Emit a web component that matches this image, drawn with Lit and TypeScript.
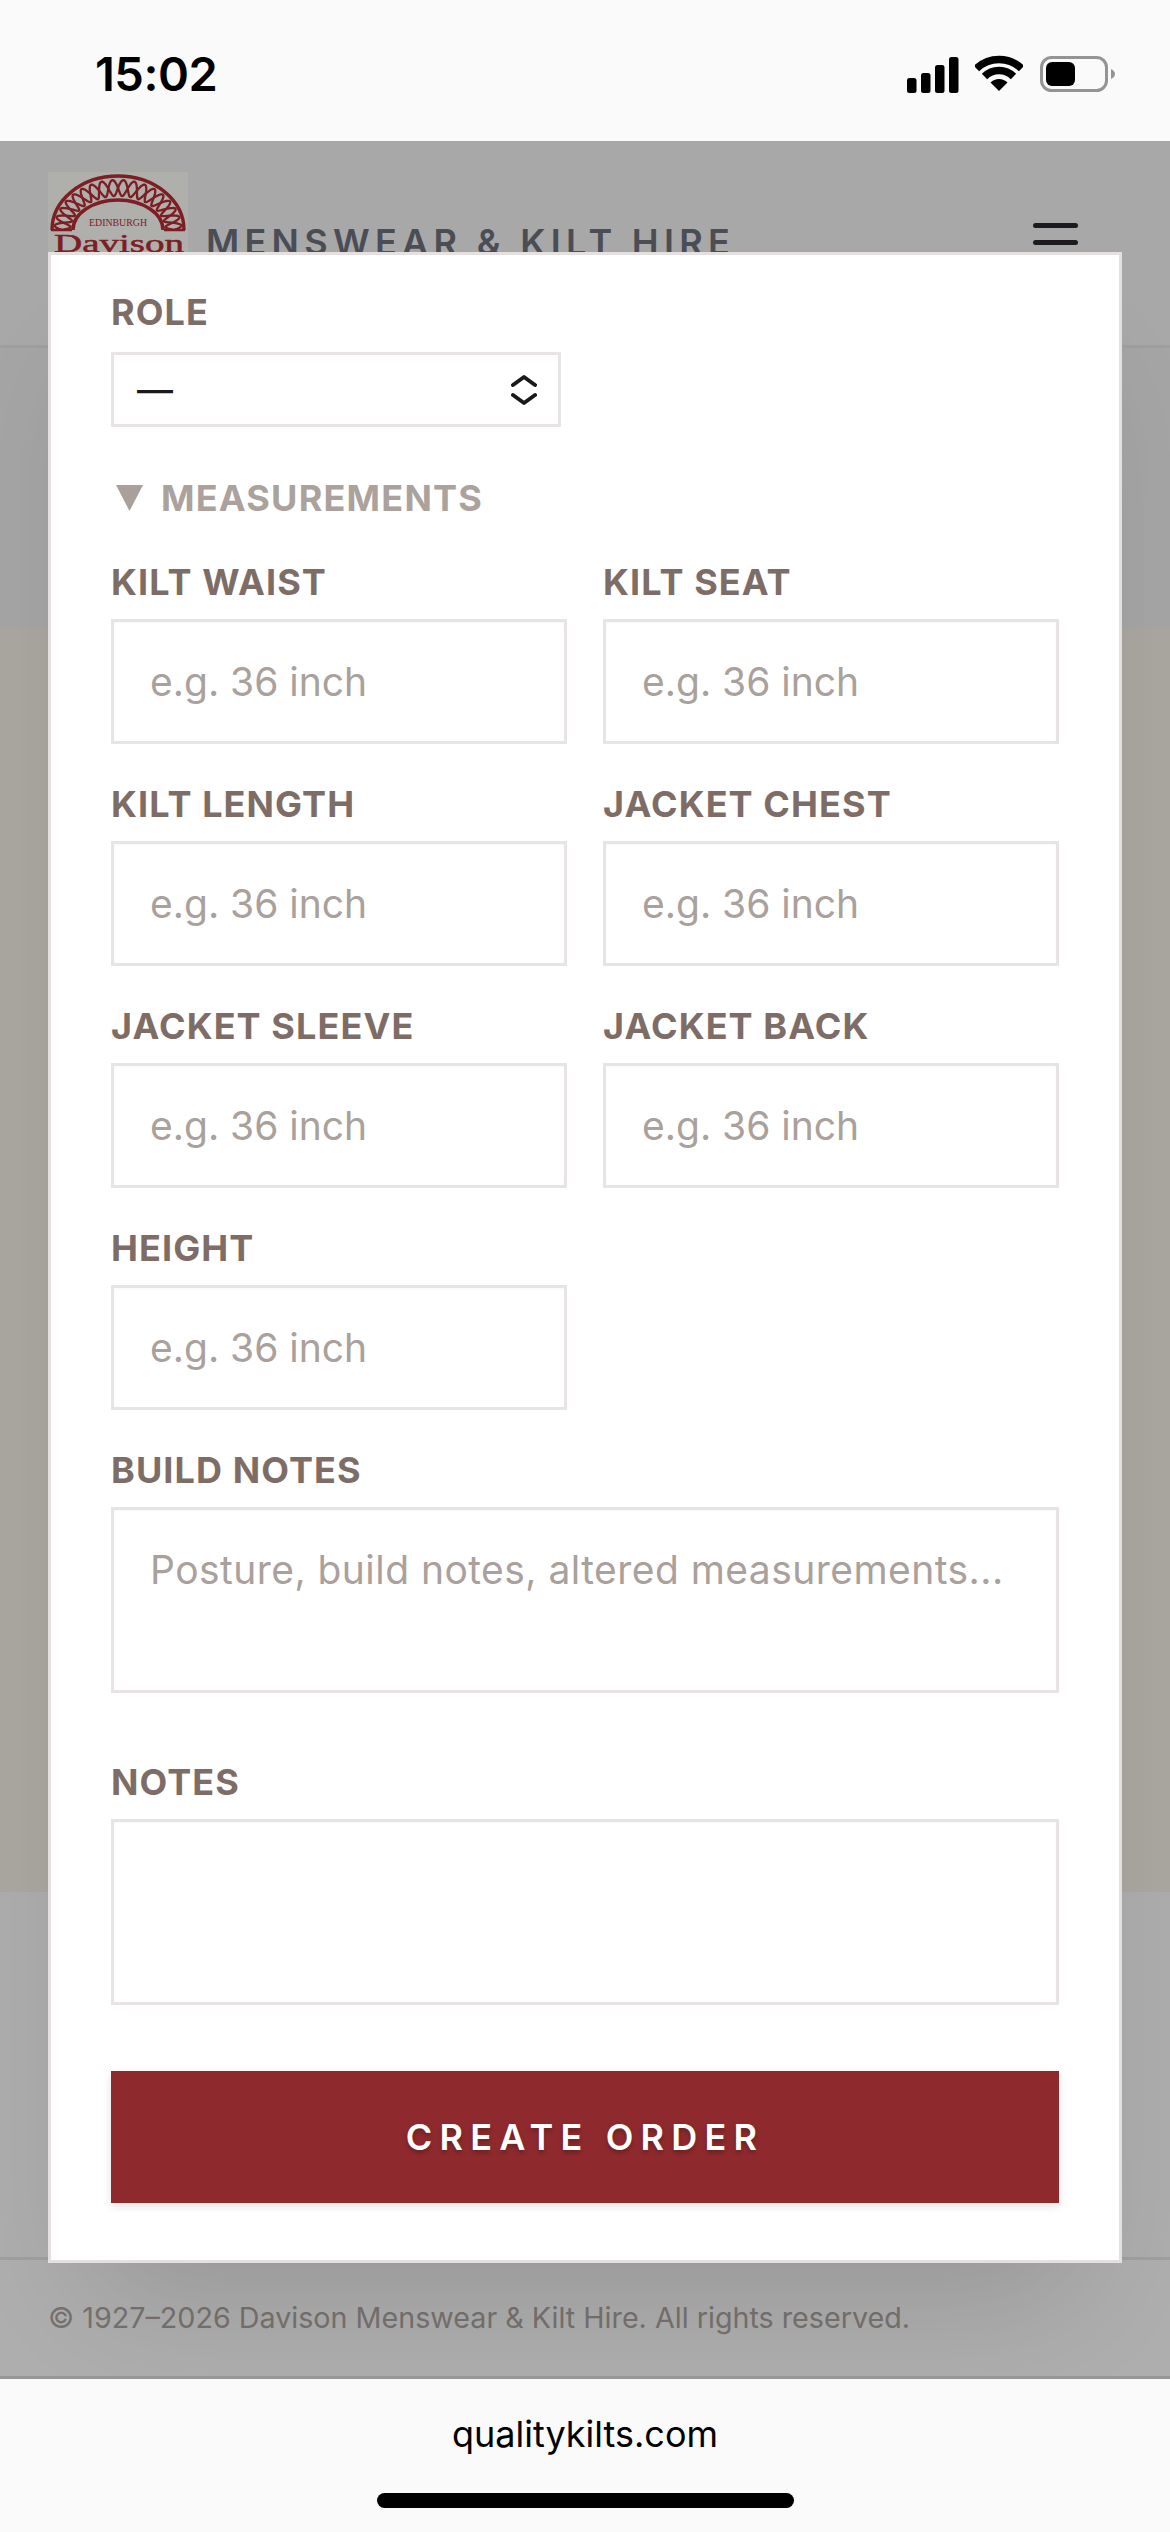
import { LitElement, html, css, svg } from "lit";
import { customElement } from "lit/decorators.js";

const FIELDS = ["KILT WAIST", "KILT SEAT", "KILT LENGTH", "JACKET CHEST", "JACKET SLEEVE", "JACKET BACK", "HEIGHT"];

function knot(phase: number): string {
  const pts: string[] = [];
  const n = 240;
  const cx = 70, cy = 58;
  for (let i = 0; i <= n; i++) {
    const t = (Math.PI * i) / n;
    const w = Math.sin(t * 18 + phase);
    const rx = 55.5 + 8 * w;
    const ry = 42 + 8 * w;
    pts.push(`${(cx - rx * Math.cos(t)).toFixed(2)},${(cy - ry * Math.sin(t)).toFixed(2)}`);
  }
  return "M" + pts.join("L");
}

@customElement("app-root")
export class AppRoot extends LitElement {
  static styles = css`
    :host { display: block; width: 1170px; height: 2532px; overflow: hidden; font-family: Inter, "Liberation Sans", sans-serif; }
    .page { position: relative; display: flex; flex-direction: column; height: 2532px; background: #fafafa; }
    .status { height: 141px; background: #fafafa; display: flex; align-items: flex-start; box-sizing: border-box; position: relative; padding: 46px 54px 0 95px; }
    .time { font-size: 47px; line-height: 56px; font-weight: 600; color: #000; letter-spacing: -0.5px; }
    .status-icons { margin-left: auto; display: flex; align-items: flex-start; padding-top: 11px; }
    .status-icons svg { display: block; }
    .main { position: relative; flex: 1; display: flex; flex-direction: column; }
    .site-header { height: 207px; background: #f2f1f1; border-bottom: 3px solid #e6e3e3; box-sizing: border-box; display: flex; align-items: flex-start; padding: 31px 92px 0 48px; }
    .logo { display: block; width: 140px; height: 90px; background: #fbfbf6; flex: none; }
    .brand { margin: 48px 0 0 18px; font-size: 36px; line-height: 44px; font-weight: 600; letter-spacing: 5.3px; color: #6c6f7a; white-space: nowrap; }
    .burger { margin: 51px 0 0 auto; display: flex; flex-direction: column; gap: 12px; width: 45px; }
    .burger span { display: block; height: 5px; border-radius: 3px; background: #2b282e; }
    .band-a { height: 280px; background: #eeeded; }
    .band-b { height: 1264px; background: #f4f0e7; }
    .band-c { height: 365px; background: #f8f8f8; }
    .site-footer { flex: 1; border-top: 3px solid #e6e3e3; background: #fafafa; box-sizing: border-box; padding: 38px 48px 0; }
    .copy { font-size: 28.7px; line-height: 40px; color: #ada4a0; white-space: nowrap; }
    .scrim { position: absolute; inset: 0; background: rgba(0, 0, 0, 0.3); }
    .modal { position: absolute; left: 48px; top: 111px; width: 1074px; box-sizing: border-box; background: #fff; border: 3px solid #e5e0e0; padding: 32px 60px 57px; box-shadow: 0 75px 120px -50px rgba(0, 0, 0, 0.15); }
    label, .lab { display: block; font-size: 36px; line-height: 50px; font-weight: 700; letter-spacing: 1.1px; color: #7d6d66; margin-bottom: 12px; white-space: nowrap; }
    .role-label { margin-bottom: 15px; }
    .select { width: 450px; height: 75px; box-sizing: border-box; border: 3px solid #e8e4e4; display: flex; align-items: center; justify-content: space-between; padding: 0 21px 0 23px; font-size: 36px; font-weight: 500; color: #1a1a1a; }
    .select svg { display: block; }
    .summary { display: flex; align-items: center; margin: 46px 0 34px; height: 50px; font-size: 36px; font-weight: 700; letter-spacing: 1.2px; color: #aba19d; }
    .summary svg { display: block; margin: 0 18px 0 5px; }
    .grid { display: grid; grid-template-columns: 456px 456px; column-gap: 36px; row-gap: 35px; }
    input, textarea { display: block; width: 100%; box-sizing: border-box; border: 3px solid #e8e4e4; border-radius: 0; background: #fff; margin: 0; outline: none; font-family: inherit; font-size: 39px; color: #1a1a1a; box-shadow: inset 0 1px 3px rgba(0, 0, 0, 0.03); }
    input { height: 125px; padding: 0 36px; }
    textarea { height: 186px; padding: 31px 36px; line-height: 58px; resize: none; overflow: hidden; letter-spacing: 0.45px; }
    input::placeholder, textarea::placeholder { color: #aaa09c; opacity: 1; }
    .block { margin-top: 35px; }
    .block-notes { margin-top: 64px; }
    .submit { display: block; width: 100%; height: 132px; margin-top: 66px; border: 0; background: #8e2a2d; color: #fff; font-family: inherit; font-size: 36px; font-weight: 600; letter-spacing: 7.2px; text-shadow: 0 3px 4px rgba(0, 0, 0, 0.25); box-shadow: 0 3px 9px rgba(0, 0, 0, 0.12); padding: 0; }
    .address { height: 156px; background: #fafafa; border-top: 3px solid #979797; box-sizing: border-box; position: relative; display: flex; flex-direction: column; align-items: center; padding-top: 33px; }
    .url { font-size: 36px; line-height: 44px; color: #000; }
    .home { width: 417px; height: 15px; border-radius: 8px; background: #000; margin-top: 37px; }
  `;

  private logo() {
    return html`<svg class="logo" viewBox="0 0 140 90" aria-hidden="true">
      ${svg`
        <g fill="none" stroke="#b22b32">
          <path d="M4 58A66 54 0 0 1 136 58" stroke-width="3.4" />
          <path d="M25 58A45 30 0 0 1 115 58" stroke-width="3.4" />
          <path d="${knot(0)}" stroke-width="2.3" />
          <path d="${knot(Math.PI)}" stroke-width="2.3" />
          <path d="M3 58H24M116 58H137" stroke-width="2.4" />
        </g>
        <text x="41" y="54" font-family="Liberation Serif" font-size="9.500" fill="#b22b32" textLength="58" lengthAdjust="spacingAndGlyphs">EDINBURGH</text>
        <text x="6" y="79.500" font-family="Liberation Serif" font-size="26" fill="#b22b32" stroke="#b22b32" stroke-width="0.5" textLength="130" lengthAdjust="spacingAndGlyphs">Davison</text>
      `}
    </svg>`;
  }

  render() {
    return html`
      <div class="page">
        <div class="status">
          <div class="time">15:02</div>
          <div class="status-icons">
            <svg width="52" height="37" viewBox="0 0 52 37"><g fill="#000">
              <rect x="0" y="21" width="9.500" height="15" rx="2.500" />
              <rect x="14" y="16" width="9.500" height="20" rx="2.500" />
              <rect x="28" y="8" width="9.500" height="28" rx="2.500" />
              <rect x="42" y="0" width="9.500" height="36" rx="2.500" />
            </g></svg>
            <svg style="margin:-2px 0 0 16px" width="48" height="37" viewBox="0 0 48 37">
              <g fill="none" stroke="#000" stroke-width="7.500" stroke-linejoin="round">
                <path d="M1.500 13.500A32.500 32.500 0 0 1 46.500 13.500" />
                <path d="M9.500 21.500A20.500 20.500 0 0 1 38.500 21.500" />
              </g>
              <path d="M24 36L15.500 27.500A12 12 0 0 1 32.500 27.500Z" fill="#000" />
            </svg>
            <svg style="margin:-1px 0 0 17px" width="76" height="37" viewBox="0 0 76 37">
              <rect x="1.500" y="1.500" width="65" height="33" rx="10" fill="none" stroke="#949494" stroke-width="3" />
              <rect x="6" y="6" width="29" height="24" rx="6" fill="#000" />
              <path d="M71 13C73.500 14 75 16 75 18S73.500 22 71 23Z" fill="#949494" />
            </svg>
          </div>
        </div>
        <div class="main">
          <div class="site-header">
            ${this.logo()}
            <div class="brand">MENSWEAR &amp; KILT HIRE</div>
            <div class="burger"><span></span><span></span><span></span></div>
          </div>
          <div class="band-a"></div>
          <div class="band-b"></div>
          <div class="band-c"></div>
          <div class="site-footer"><div class="copy">© 1927–2026 Davison Menswear &amp; Kilt Hire. All rights reserved.</div></div>
          <div class="scrim"></div>
          <div class="modal">
            <div class="lab role-label">ROLE</div>
            <div class="select">
              <span>—</span>
              <svg width="30" height="34" viewBox="0 0 30 34"><g fill="none" stroke="#1a1a1a" stroke-width="4" stroke-linecap="round" stroke-linejoin="round"><path d="M6 12L17 4L28 12" /><path d="M6 22L17 30L28 22" /></g></svg>
            </div>
            <div class="summary">
              <svg width="27" height="26" viewBox="0 0 27 26"><path d="M0 0H27L13.500 26Z" fill="#a9a09c" /></svg>
              <span>MEASUREMENTS</span>
            </div>
            <div class="grid">
              ${FIELDS.map((f) => html`<div><label>${f}</label><input placeholder="e.g. 36 inch" /></div>`)}
            </div>
            <div class="block">
              <label>BUILD NOTES</label>
              <textarea placeholder="Posture, build notes, altered measurements..."></textarea>
            </div>
            <div class="block-notes">
              <label>NOTES</label>
              <textarea></textarea>
            </div>
            <button class="submit">CREATE ORDER</button>
          </div>
        </div>
        <div class="address">
          <div class="url">qualitykilts.com</div>
          <div class="home"></div>
        </div>
      </div>
    `;
  }
}
